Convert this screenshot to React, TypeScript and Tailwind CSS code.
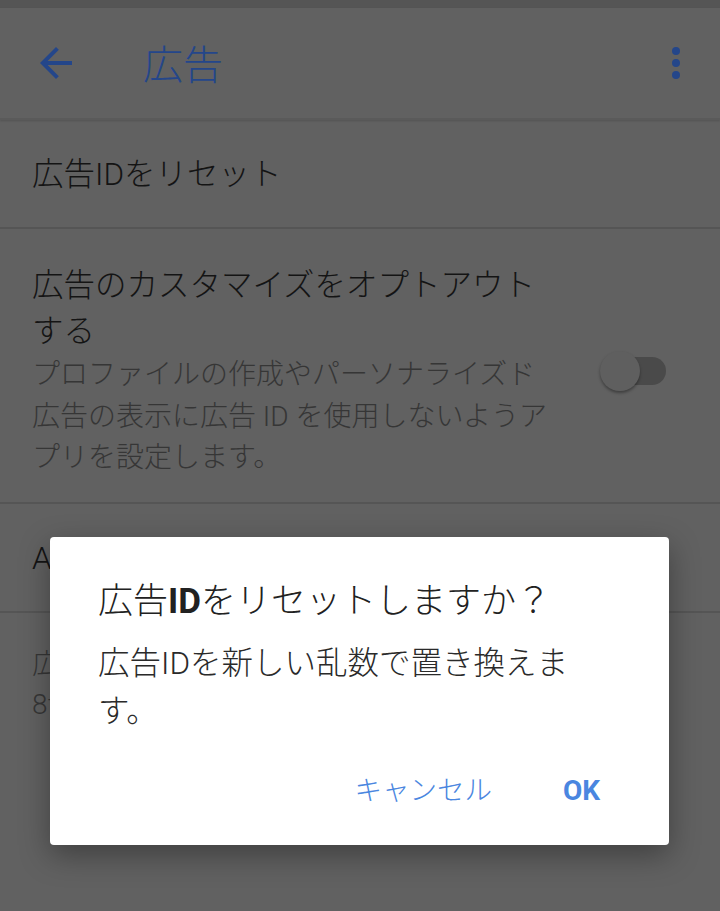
import React from "react";

const font = { fontFamily: '"Roboto", "Noto Sans CJK JP", sans-serif' };

export default function App() {
  return (
    <div className="relative w-[720px] h-[911px] overflow-hidden bg-[#616161] font-light" style={font}>
      {/* status strip */}
      <div className="h-[8px] bg-[#555555]" />
      {/* toolbar */}
      <div className="flex h-[112px] items-center border-b-2 border-[#5a5a5a] shadow-[0_1px_2px_rgba(0,0,0,0.15)]">
        <div className="ml-[32px] h-[48px] w-[48px] text-[#24468a]">
          <svg viewBox="0 0 24 24" width="48" height="48" fill="currentColor">
            <path d="M20 11H7.83l5.59-5.59L12 4l-8 8 8 8 1.41-1.41L7.83 13H20v-2z" />
          </svg>
        </div>
        <div className="ml-[63px] mt-[5px] text-[40px] leading-[48px] text-[#24468a]">広告</div>
        <div className="ml-auto mr-[20px] h-[48px] w-[48px] text-[#24468a]">
          <svg viewBox="0 0 24 24" width="48" height="48" fill="currentColor">
            <circle cx="12" cy="6" r="2" />
            <circle cx="12" cy="12" r="2" />
            <circle cx="12" cy="18" r="2" />
          </svg>
        </div>
      </div>
      {/* row 1 */}
      <div className="flex h-[109px] items-center border-b-2 border-[#555555] px-[32px] pt-[3px]">
        <div className="text-[31.5px] leading-[44px] text-[#141414]">広告IDをリセット</div>
      </div>
      {/* row 2 */}
      <div className="flex items-center border-b-2 border-[#555555] pl-[32px] pr-[54px] pt-[34px] pb-[23px]">
        <div className="w-[520px]">
          <div className="text-[31.5px] leading-[46px] text-[#141414]">
            広告のカスタマイズをオプトアウトする
          </div>
          <div className="mt-[-1px] text-[28px] leading-[41.5px] text-[#363636]">
            プロファイルの作成やパーソナライズド広告の表示に広告 ID を使用しないようアプリを設定します。
          </div>
        </div>
        <div className="relative ml-auto h-[40px] w-[66px]">
          <div className="absolute right-0 top-[6px] h-[28px] w-[60px] rounded-full bg-[#4a4a4a]" />
          <div className="absolute left-0 top-0 h-[40px] w-[40px] rounded-full bg-[#5f5f5f] shadow-[0_2px_3px_rgba(0,0,0,0.35)]" />
        </div>
      </div>
      {/* row 3 */}
      <div className="flex h-[109px] items-center border-b-2 border-[#555555] px-[32px] pt-[3px]">
        <div className="text-[31.5px] leading-[44px] text-[#141414]">Ads by Google のパーソナライズ</div>
      </div>
      {/* row 4 */}
      <div className="px-[32px] pt-[32px]">
        <div className="text-[28px] leading-[40px] text-[#363636]">広告 ID:</div>
        <div className="text-[28px] leading-[40px] text-[#363636]">8f2a6c1e-4b7d-4e0a-9c35-1d8b2f6e7a90</div>
      </div>

      {/* dialog */}
      <div className="absolute left-[50px] top-[537px] w-[619px] h-[308px] rounded-[4px] bg-white shadow-[0_10px_30px_rgba(0,0,0,0.35)] flex flex-col">
        <div className="px-[48px] pt-[41px] text-[35px] leading-[48px] text-[#212121]">
          広告<span className="font-bold">ID</span>をリセットしますか？
        </div>
        <div className="mt-[14px] px-[48px] text-[31.5px] leading-[48px] text-[#2a2a2a]">
          広告IDを新しい乱数で置き換えます。
        </div>
        <div className="mt-auto mb-[26px] flex h-[56px] items-center justify-end pr-[69px] text-[#4a86e0]">
          <div className="text-[27.5px] leading-[40px]">キャンセル</div>
          <div className="ml-[71px] text-[28px] font-bold leading-[40px]">OK</div>
        </div>
      </div>
    </div>
  );
}
